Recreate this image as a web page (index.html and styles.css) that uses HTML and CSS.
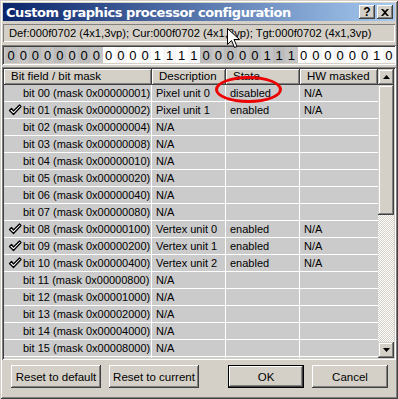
FILE: index.html
```html
<!DOCTYPE html>
<html lang="en">
<head>
    <meta charset="UTF-8">
    <title>Custom graphics processor configuration</title>
    <link rel="stylesheet" href="styles.css">
</head>
<body>
    <div class="window">
        <div class="titlebar">
            <span class="title">Custom graphics processor configuration</span>
            <div class="title-btns">
                <button class="tbtn help">?</button>
                <button class="tbtn close">
                    <svg width="8" height="7" viewBox="0 0 8 7"><path d="M0 0h2l2 2 2-2h2L5 3.5 8 7H6L4 5 2 7H0l3-3.5z" fill="#000"/></svg>
                </button>
            </div>
        </div>

        <div class="info">Def:000f0702 (4x1,3vp); Cur:000f0702 (4x1,3vp); Tgt:000f0702 (4x1,3vp)</div>

        <div class="bits">
            <span class="c g">0</span><span class="c g2">0</span><span class="c g">0</span><span class="c g2">0</span><span class="c g">0</span><span class="c g2">0</span><span class="c g">0</span><span class="c g2">0</span>
            <span class="c w">0</span><span class="c w2">0</span><span class="c w">0</span><span class="c w2">0</span><span class="c w">1</span><span class="c w2">1</span><span class="c w">1</span><span class="c w2">1</span>
            <span class="c g">0</span><span class="c g2">0</span><span class="c g">0</span><span class="c g2">0</span><span class="c g">0</span><span class="c g2">1</span><span class="c g">1</span><span class="c g2">1</span>
            <span class="c w">0</span><span class="c w2">0</span><span class="c w">0</span><span class="c w2">0</span><span class="c w">0</span><span class="c w2">0</span><span class="c w">1</span><span class="c w2">0</span>
        </div>

        <div class="list">
            <div class="grid">
                <div class="row head">
                    <div class="hd col1">Bit field / bit mask</div>
                    <div class="hd col2">Description</div>
                    <div class="hd col3">State</div>
                    <div class="hd col4">HW masked</div>
                </div>
                <div class="row"><div class="cell col1"><span class="chk"></span>bit 00 (mask 0x00000001)</div><div class="cell col2">Pixel unit 0</div><div class="cell col3">disabled</div><div class="cell col4">N/A</div></div>
                <div class="row"><div class="cell col1"><span class="chk"><svg width="14" height="12" viewBox="0 0 14 12"><path d="M1.5 6.5L3.5 4.5 5.5 7 11.5 1 13 2.5 5.5 10.5z" fill="#fff" stroke="#000" stroke-width="1.3" stroke-linejoin="round"/></svg></span>bit 01 (mask 0x00000002)</div><div class="cell col2">Pixel unit 1</div><div class="cell col3">enabled</div><div class="cell col4">N/A</div></div>
                <div class="row"><div class="cell col1"><span class="chk"></span>bit 02 (mask 0x00000004)</div><div class="cell col2">N/A</div><div class="cell col3"></div><div class="cell col4"></div></div>
                <div class="row"><div class="cell col1"><span class="chk"></span>bit 03 (mask 0x00000008)</div><div class="cell col2">N/A</div><div class="cell col3"></div><div class="cell col4"></div></div>
                <div class="row"><div class="cell col1"><span class="chk"></span>bit 04 (mask 0x00000010)</div><div class="cell col2">N/A</div><div class="cell col3"></div><div class="cell col4"></div></div>
                <div class="row"><div class="cell col1"><span class="chk"></span>bit 05 (mask 0x00000020)</div><div class="cell col2">N/A</div><div class="cell col3"></div><div class="cell col4"></div></div>
                <div class="row"><div class="cell col1"><span class="chk"></span>bit 06 (mask 0x00000040)</div><div class="cell col2">N/A</div><div class="cell col3"></div><div class="cell col4"></div></div>
                <div class="row"><div class="cell col1"><span class="chk"></span>bit 07 (mask 0x00000080)</div><div class="cell col2">N/A</div><div class="cell col3"></div><div class="cell col4"></div></div>
                <div class="row"><div class="cell col1"><span class="chk"><svg width="14" height="12" viewBox="0 0 14 12"><path d="M1.5 6.5L3.5 4.5 5.5 7 11.5 1 13 2.5 5.5 10.5z" fill="#fff" stroke="#000" stroke-width="1.3" stroke-linejoin="round"/></svg></span>bit 08 (mask 0x00000100)</div><div class="cell col2">Vertex unit 0</div><div class="cell col3">enabled</div><div class="cell col4">N/A</div></div>
                <div class="row"><div class="cell col1"><span class="chk"><svg width="14" height="12" viewBox="0 0 14 12"><path d="M1.5 6.5L3.5 4.5 5.5 7 11.5 1 13 2.5 5.5 10.5z" fill="#fff" stroke="#000" stroke-width="1.3" stroke-linejoin="round"/></svg></span>bit 09 (mask 0x00000200)</div><div class="cell col2">Vertex unit 1</div><div class="cell col3">enabled</div><div class="cell col4">N/A</div></div>
                <div class="row"><div class="cell col1"><span class="chk"><svg width="14" height="12" viewBox="0 0 14 12"><path d="M1.5 6.5L3.5 4.5 5.5 7 11.5 1 13 2.5 5.5 10.5z" fill="#fff" stroke="#000" stroke-width="1.3" stroke-linejoin="round"/></svg></span>bit 10 (mask 0x00000400)</div><div class="cell col2">Vertex unit 2</div><div class="cell col3">enabled</div><div class="cell col4">N/A</div></div>
                <div class="row"><div class="cell col1"><span class="chk"></span>bit 11 (mask 0x00000800)</div><div class="cell col2">N/A</div><div class="cell col3"></div><div class="cell col4"></div></div>
                <div class="row"><div class="cell col1"><span class="chk"></span>bit 12 (mask 0x00001000)</div><div class="cell col2">N/A</div><div class="cell col3"></div><div class="cell col4"></div></div>
                <div class="row"><div class="cell col1"><span class="chk"></span>bit 13 (mask 0x00002000)</div><div class="cell col2">N/A</div><div class="cell col3"></div><div class="cell col4"></div></div>
                <div class="row"><div class="cell col1"><span class="chk"></span>bit 14 (mask 0x00004000)</div><div class="cell col2">N/A</div><div class="cell col3"></div><div class="cell col4"></div></div>
                <div class="row"><div class="cell col1"><span class="chk"></span>bit 15 (mask 0x00008000)</div><div class="cell col2">N/A</div><div class="cell col3"></div><div class="cell col4"></div></div>
                <div class="row"><div class="cell col1"></div><div class="cell col2"></div><div class="cell col3"></div><div class="cell col4"></div></div>
            </div>
            <div class="scrollbar">
                <div class="sbtn"><svg width="7" height="4" viewBox="0 0 7 4"><path d="M3.5 0L7 4H0z" fill="#000"/></svg></div>
                <div class="thumb"></div>
                <div class="track"></div>
                <div class="sbtn"><svg width="7" height="4" viewBox="0 0 7 4"><path d="M0 0h7L3.5 4z" fill="#000"/></svg></div>
            </div>
        </div>

        <div class="buttons">
            <button class="btn wide">Reset to default</button>
            <button class="btn wide">Reset to current</button>
            <span class="spacer"></span>
            <button class="btn def">OK</button>
            <button class="btn">Cancel</button>
        </div>

        <!-- annotations drawn over the dialog -->
        <div class="mark"></div>
        <svg class="cursor" width="13" height="20" viewBox="0 0 13 20">
            <path d="M0.5 0.5V16.5L4.5 12.5 7.5 19.5 10 18.5 7 11.5H12.5z" fill="#fff" stroke="#000" stroke-width="1"/>
        </svg>
    </div>
</body>
</html>
```

FILE: styles.css
```css
*, *::before, *::after{
    margin: 0;
    padding: 0;
    box-sizing: border-box;
}

body{
    font-family: "Liberation Sans", Arial, sans-serif;
    font-size: 11px;
    color: #000;
    background: #fff;
}

.window{
    position: relative;
    width: 398px;
    height: 399px;
    background: #d4d0c8;
    padding: 3px 2px 2px 2px;
    display: flex;
    flex-direction: column;
    box-shadow: inset 1px 1px #d4d0c8, inset -1px -1px #404040, inset 2px 2px #fff, inset -2px -2px #808080;
}

.titlebar{
    height: 18px;
    margin: 0 1px;
    padding-left: 3px;
    display: flex;
    align-items: center;
    justify-content: space-between;
    background: linear-gradient(to right, #0a246a, #a6caf0);
}
.title{
    color: #fff;
    font-weight: bold;
    font-size: 13px;
    font-family: "DejaVu Sans", sans-serif;
    letter-spacing: -0.45px;
}
.title-btns{
    display: flex;
    gap: 2px;
    padding-right: 2px;
}
.tbtn{
    width: 16px;
    height: 14px;
    border: 0;
    background: #d4d0c8;
    display: flex;
    align-items: center;
    justify-content: center;
    font: bold 12px "Liberation Sans", sans-serif;
    box-shadow: inset -1px -1px #404040, inset 1px 1px #fff, inset -2px -2px #808080;
}

.info{
    margin-top: 2px;
    height: 20px;
    padding: 3px 6px 0;
    white-space: nowrap;
    overflow: hidden;
    font-size: 11.2px;
    box-shadow: inset 1px 1px #808080, inset -1px -1px #fff, inset 2px 2px #d4d0c8;
    border: 1px solid transparent;
}

.bits{
    margin-top: 2px;
    height: 20px;
    padding: 2px 1px 2px 3px;
    display: flex;
    box-shadow: inset 1px 1px #808080, inset -1px -1px #fff, inset 2px 2px #404040, inset -2px -2px #d4d0c8;
}
.c{
    flex: 1;
    display: flex;
    align-items: center;
    justify-content: center;
    font-size: 13px;
}
.g{ background: #bcbcbc; }
.g2{ background: #c4c4c4; }
.w{ background: #fff; }
.w2{ background: #f6f6f6; }

.list{
    margin-top: 2px;
    height: 293px;
    padding: 2px;
    display: flex;
    box-shadow: inset 1px 1px #808080, inset -1px -1px #fff, inset 2px 2px #404040, inset -2px -2px #d4d0c8;
}
.grid{
    flex: 1;
    overflow: hidden;
    background: #cbcbcb;
}
.row{
    display: flex;
    height: 17px;
    border-bottom: 1px solid #fff;
}
.row.head{
    height: 16px;
    border-bottom: 0;
}
.col1{ width: 148px; }
.col2{ width: 74px; }
.col3{ width: 74px; }
.col4{ flex: 1; }

.hd{
    background: #d4d0c8;
    padding: 1px 0 0 7px;
    white-space: nowrap;
    font-size: 11.5px;
    box-shadow: inset -1px -1px #404040, inset 1px 1px #fff, inset -2px -2px #808080;
}
.cell{
    display: flex;
    align-items: center;
    padding-left: 4px;
    white-space: nowrap;
    border-right: 1px solid #fff;
}
.cell.col4{
    border-right: 0;
}
.chk{
    width: 15px;
    height: 12px;
    display: flex;
    align-items: center;
}

.scrollbar{
    width: 16px;
    display: flex;
    flex-direction: column;
}
.sbtn{
    height: 16px;
    background: #d4d0c8;
    display: flex;
    align-items: center;
    justify-content: center;
    box-shadow: inset -1px -1px #404040, inset 1px 1px #d4d0c8, inset -2px -2px #808080, inset 2px 2px #fff;
}
.thumb{
    height: 130px;
    background: #d4d0c8;
    box-shadow: inset -1px -1px #404040, inset 1px 1px #d4d0c8, inset -2px -2px #808080, inset 2px 2px #fff;
}
.track{
    flex: 1;
    background: repeating-conic-gradient(#fff 0 25%, #d4d0c8 0 50%) 0 0 / 2px 2px;
}

.buttons{
    display: flex;
    align-items: center;
    gap: 8px;
    margin-top: 5px;
    padding: 0 8px 0 9px;
}
.spacer{
    flex: 1;
}
.btn{
    width: 76px;
    height: 23px;
    border: 0;
    padding: 0;
    white-space: nowrap;
    background: #d4d0c8;
    font: 11.5px "Liberation Sans", sans-serif;
    box-shadow: inset -1px -1px #404040, inset 1px 1px #fff, inset -2px -2px #808080;
}
.btn.wide{
    width: 90px;
}
.btn.def{
    outline: 1px solid #000;
    outline-offset: -1px;
    box-shadow: inset -2px -2px #404040, inset 2px 2px #fff, inset -3px -3px #808080;
}

.mark{
    position: absolute;
    left: 215px;
    top: 76px;
    width: 67px;
    height: 27px;
    border: 3px solid #ec0000;
    border-radius: 50%;
}
.cursor{
    position: absolute;
    left: 227px;
    top: 28px;
}
```
